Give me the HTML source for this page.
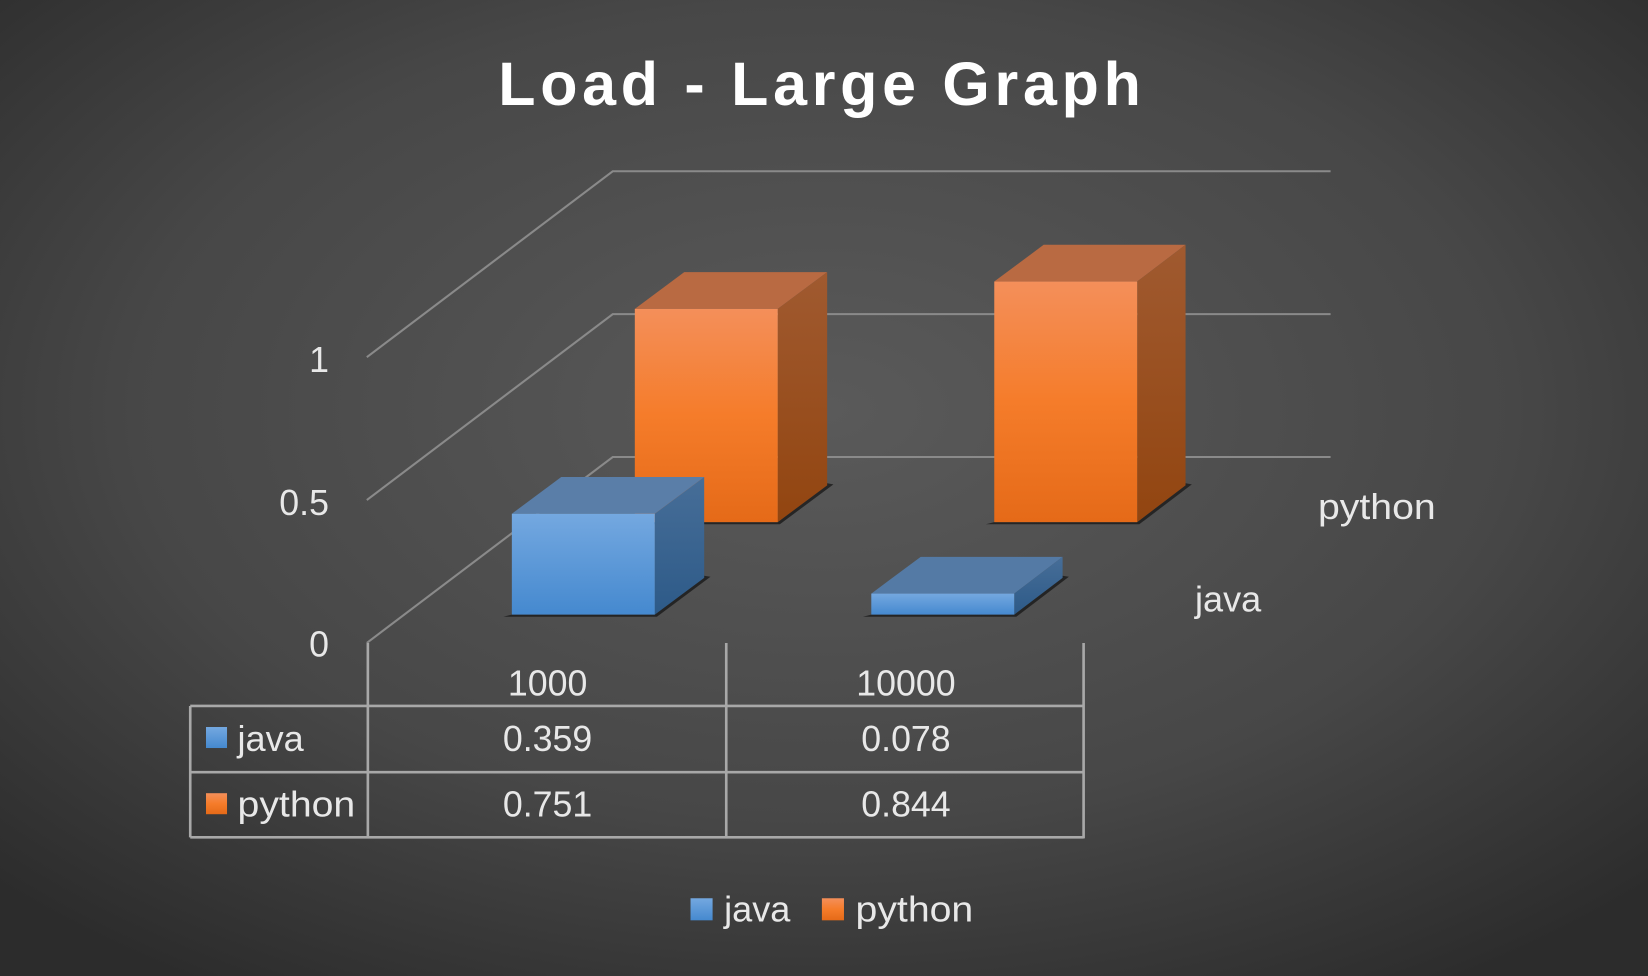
<!DOCTYPE html>
<html><head><meta charset="utf-8"><style>
html,body{margin:0;padding:0;width:1648px;height:976px;overflow:hidden;background:#3a3a3a}
svg{display:block}
text{font-family:"Liberation Sans",sans-serif;fill:#e8e8e8}
</style></head><body>
<svg width="1648" height="976" viewBox="0 0 1568 929" preserveAspectRatio="none" xmlns="http://www.w3.org/2000/svg">
<defs>
<radialGradient id="bg" cx="50%" cy="42%" r="70%">
<stop offset="0" stop-color="#5a5a5a"/><stop offset="0.6" stop-color="#474747"/><stop offset="1" stop-color="#2c2c2c"/>
</radialGradient>
<linearGradient id="of" x1="0" y1="0" x2="0" y2="1"><stop offset="0" stop-color="#f48f5a"/><stop offset="0.5" stop-color="#f57c2a"/><stop offset="1" stop-color="#e56a18"/></linearGradient>
<linearGradient id="os" x1="0" y1="0" x2="0" y2="1"><stop offset="0" stop-color="#a05a30"/><stop offset="1" stop-color="#924510"/></linearGradient>
<linearGradient id="bf" x1="0" y1="0" x2="0" y2="1"><stop offset="0" stop-color="#74a8e0"/><stop offset="1" stop-color="#4589cf"/></linearGradient>
<linearGradient id="bs" x1="0" y1="0" x2="0" y2="1"><stop offset="0" stop-color="#476e98"/><stop offset="1" stop-color="#2d5a88"/></linearGradient>
</defs>
<rect width="1568" height="929" fill="url(#bg)"/>
<text x="782" y="100" text-anchor="middle" font-size="58" font-weight="bold" letter-spacing="4.5" style="fill:#fff">Load - Large Graph</text>
<g stroke="#8a8a8a" stroke-width="2" fill="none">
<polyline points="349,340 583,163 1266,163"/>
<polyline points="349,476 583,299 1266,299"/>
<polyline points="349,612 583,435 1266,435"/>
</g>
<g stroke="#a8a8a8" stroke-width="2.5" fill="none">
<line x1="350" y1="612" x2="350" y2="798"/>
<line x1="691" y1="612" x2="691" y2="798"/>
<line x1="1031" y1="612" x2="1031" y2="798"/>
<line x1="181" y1="672" x2="1031" y2="672"/>
<line x1="181" y1="735" x2="1031" y2="735"/>
<line x1="181" y1="797" x2="1031" y2="797"/>
<line x1="181" y1="672" x2="181" y2="797"/>
</g>
<g fill="#1a1a1a" opacity="0.8">
<polygon points="596,499 742,499 793,461 787,460 740,497 604,497"/>
<polygon points="938,499 1084,499 1134,461 1128,460 1082,497 946,497"/>
<polygon points="479,587 625,587 676,549 670,548 623,585 487,585"/>
<polygon points="821,587 967,587 1017,549 1011,548 965,585 829,585"/>
</g>
<polygon points="604,294 651,259 787,259 740,294" fill="#b96a42"/>
<polygon points="740,294 787,259 787,462 740,497" fill="url(#os)"/>
<rect x="604" y="294" width="136" height="203" fill="url(#of)"/>
<polygon points="946,268 993,233 1128,233 1082,268" fill="#b96a42"/>
<polygon points="1082,268 1128,233 1128,462 1082,497" fill="url(#os)"/>
<rect x="946" y="268" width="136" height="229" fill="url(#of)"/>
<polygon points="487,489 534,454 670,454 623,489" fill="#5a7ea8"/>
<polygon points="623,489 670,454 670,550 623,585" fill="url(#bs)"/>
<rect x="487" y="489" width="136" height="96" fill="url(#bf)"/>
<polygon points="829,565 876,530 1011,530 965,565" fill="#547aa5"/>
<polygon points="965,565 1011,530 1011,550 965,585" fill="url(#bs)"/>
<rect x="829" y="565" width="136" height="20" fill="url(#bf)"/>
<g font-size="34">
<text x="313" y="354" text-anchor="end">1</text>
<text x="313" y="490" text-anchor="end">0.5</text>
<text x="313" y="625" text-anchor="end">0</text>
<text x="1254" y="494" textLength="112" lengthAdjust="spacingAndGlyphs">python</text>
<text x="1137" y="582" textLength="63" lengthAdjust="spacingAndGlyphs">java</text>
<text x="521" y="662" text-anchor="middle">1000</text>
<text x="862" y="662" text-anchor="middle">10000</text>
<text x="226" y="715" textLength="63" lengthAdjust="spacingAndGlyphs">java</text>
<text x="226" y="777" textLength="112" lengthAdjust="spacingAndGlyphs">python</text>
<text x="521" y="715" text-anchor="middle">0.359</text>
<text x="862" y="715" text-anchor="middle">0.078</text>
<text x="521" y="777" text-anchor="middle">0.751</text>
<text x="862" y="777" text-anchor="middle">0.844</text>
<text x="689" y="877" textLength="63" lengthAdjust="spacingAndGlyphs">java</text>
<text x="814" y="877" textLength="112" lengthAdjust="spacingAndGlyphs">python</text>
</g>
<rect x="196" y="692" width="20" height="20" fill="url(#bf)"/>
<rect x="196" y="755" width="20" height="20" fill="url(#of)"/>
<rect x="657" y="855" width="21" height="21" fill="url(#bf)"/>
<rect x="782" y="855" width="21" height="21" fill="url(#of)"/>
</svg>
</body></html>
